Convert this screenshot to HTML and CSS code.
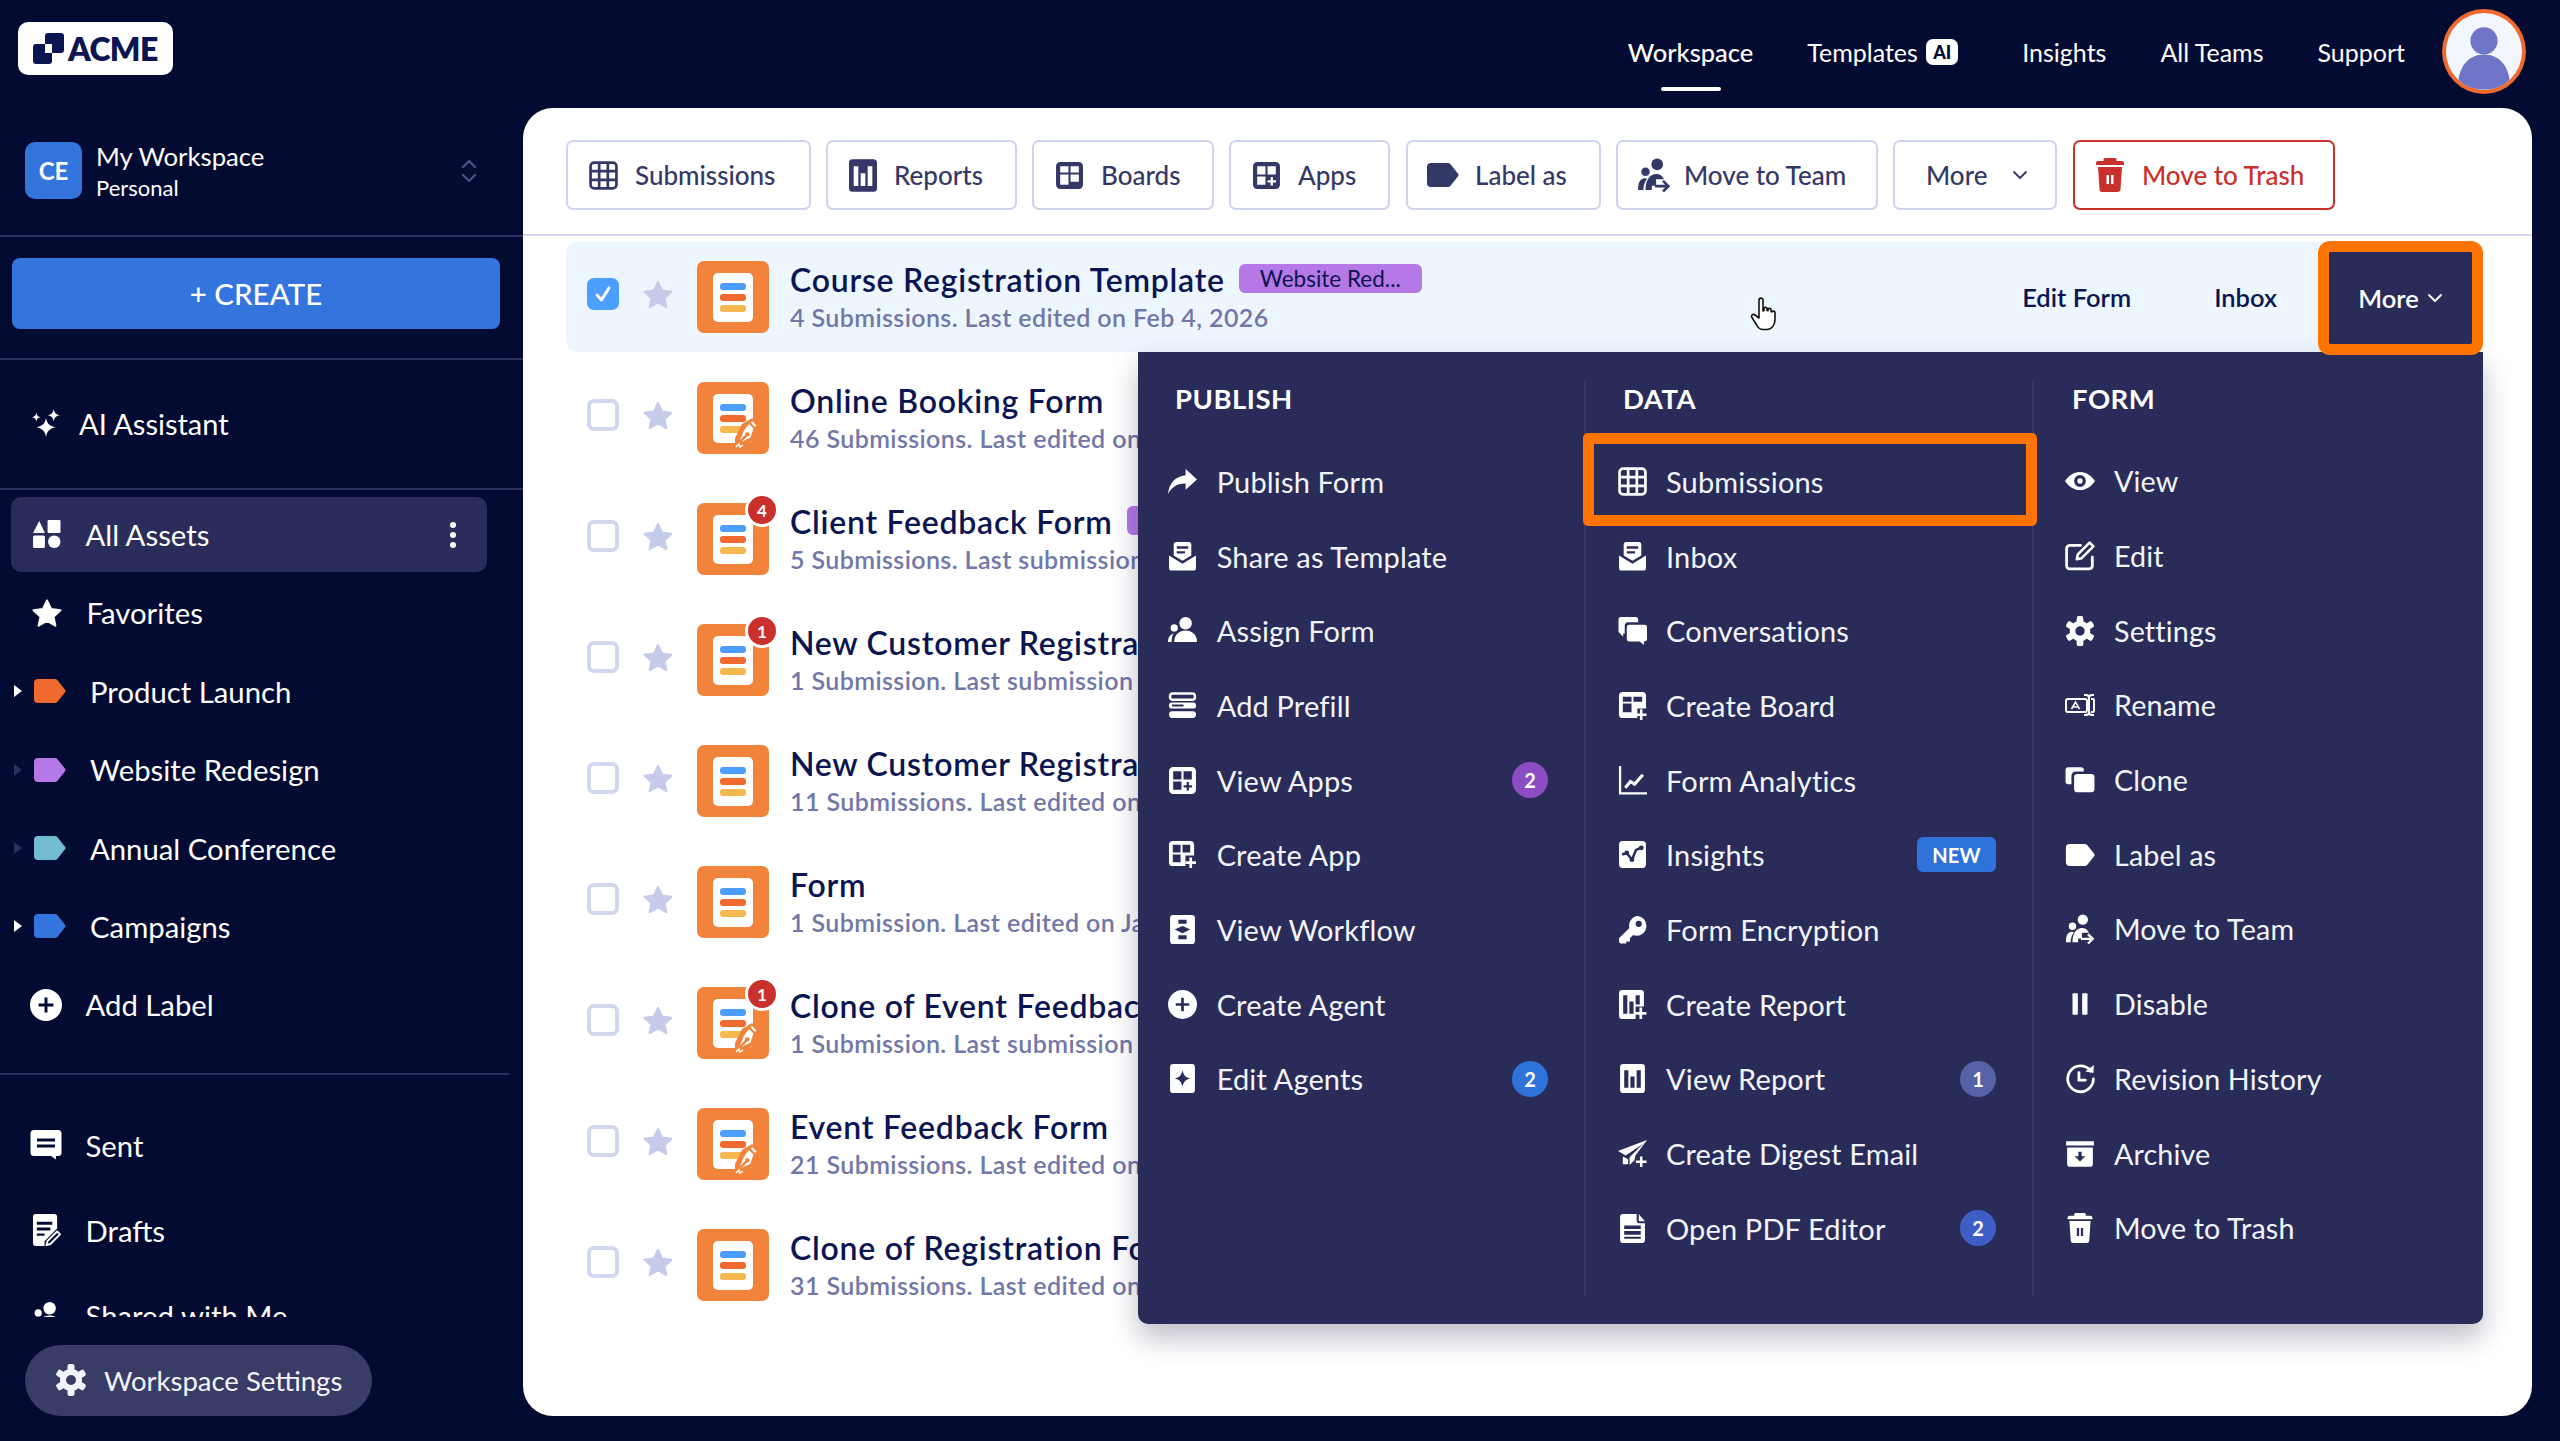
FILE: index.html
```html
<!DOCTYPE html>
<html lang="en">
<head>
<meta charset="utf-8">
<title>ACME Workspace</title>
<link rel="stylesheet" href="styles.css">
</head>
<body>
<svg class="sprite" aria-hidden="true">
  <symbol id="i-grid" viewBox="0 0 28 28"><g fill="none" stroke="currentColor" stroke-width="2.6"><rect x="1.5" y="1.5" width="25" height="25" rx="3.5"/><path d="M9.8 2v24M18.2 2v24M2 9.8h24M2 18.2h24"/></g></symbol>
  <symbol id="i-report" viewBox="2 0 24 28"><path fill="currentColor" fill-rule="evenodd" d="M5 0h18a3 3 0 0 1 3 3v22a3 3 0 0 1-3 3H5a3 3 0 0 1-3-3V3a3 3 0 0 1 3-3z M6 6h4v17H6z M12 12h4v11h-4z M18 6h4v17h-4z"/></symbol>
  <symbol id="i-board" viewBox="0 0 28 28"><path fill="currentColor" fill-rule="evenodd" d="M5 1h18a4 4 0 0 1 4 4v18a4 4 0 0 1-4 4H5a4 4 0 0 1-4-4V5a4 4 0 0 1 4-4z M5 5h8v6H5z M15 5h8v6h-8z M5 13h8v10H5z M15 13h8v7h-8z"/></symbol>
  <symbol id="i-apps" viewBox="0 0 28 28"><path fill="currentColor" fill-rule="evenodd" d="M5 1h18a4 4 0 0 1 4 4v18a4 4 0 0 1-4 4H5a4 4 0 0 1-4-4V5a4 4 0 0 1 4-4z M5 5h8v8H5z M15 5h8v8h-8z M5 15h8v8H5z M18 15.5h2.2v3h3v2.2h-3v3H18v-3h-3v-2.2h3z"/></symbol>
  <symbol id="i-createapp" viewBox="0 0 30 30"><path fill="currentColor" fill-rule="evenodd" d="M5 1h18a4 4 0 0 1 4 4v11h-9v11H5a4 4 0 0 1-4-4V5a4 4 0 0 1 4-4z M5 5v8h8V5z M15 5v8h8V5z M5 15v8h8v-8z"/><path fill="none" stroke="currentColor" stroke-width="2.8" d="M23.500 18v11M18 23.500h11"/></symbol>
  <symbol id="i-createboard" viewBox="0 0 30 30"><path fill="currentColor" fill-rule="evenodd" d="M5 1h20a4 4 0 0 1 4 4v13h-9v10H5a4 4 0 0 1-4-4V5a4 4 0 0 1 4-4z M5 6h9v5H5z M16 6h9v5h-9z M5 13h9v9H5z"/><path fill="none" stroke="currentColor" stroke-width="2.6" d="M24 19v11M18.5 24.500h11"/></symbol>
  <symbol id="i-label" viewBox="0 0 33 24"><path fill="currentColor" d="M5 0h17a3 3 0 0 1 2.300 1l7.600 9.400a2.600 2.600 0 0 1 0 3.200L24.300 23a3 3 0 0 1-2.300 1H5a4 4 0 0 1-4-4V4a4 4 0 0 1 4-4z"/></symbol>
  <symbol id="i-team" viewBox="0 0 32 32"><g fill="currentColor"><circle cx="19" cy="6" r="5.500"/><circle cx="8" cy="13" r="4"/><path d="M8 30c0-9 4-15 10-15 4 0 6 2 7.500 5H18v6h-4v4z"/><path d="M1 30c0-6 1.500-11 6.500-11 1 0 1.500 .2 2 .5C7.500 22 6 26 6 30z"/></g><path fill="none" stroke="currentColor" stroke-width="2.500" d="M17 26.500h11M24.500 21.500l5 5-5 5"/></symbol>
  <symbol id="i-trash" viewBox="0 0 28 34"><path fill="currentColor" fill-rule="evenodd" d="M9 0h10a1.500 1.500 0 0 1 1.500 1.500V3H26a2 2 0 0 1 2 2v2H0V5a2 2 0 0 1 2-2h5.500V1.500A1.500 1.500 0 0 1 9 0z M2 9h24l-1.500 22a3 3 0 0 1-3 3h-15a3 3 0 0 1-3-3z M10.500 17v9h2.500v-9z M15 17v9h2.500v-9z"/></symbol>
  <symbol id="i-share" viewBox="0 0 28 28"><path fill="currentColor" d="M17 2l11 10-11 10v-6C9 16 4 19 0 26c1-10 7-17 17-18z"/></symbol>
  <symbol id="i-mail" viewBox="0 0 28 28"><path fill="currentColor" fill-rule="evenodd" d="M1 13l13 8 13-8v12a2.500 2.500 0 0 1-2.500 2.500h-21A2.500 2.500 0 0 1 1 25z M8 0h12a2.500 2.500 0 0 1 2.500 2.500V13L14 18 5.500 13V2.500A2.500 2.500 0 0 1 8 0z M8.500 4v2.500h11V4z M8.500 9v2h8V9z"/></symbol>
  <symbol id="i-assign" viewBox="0 0 28 28"><g fill="currentColor"><circle cx="17" cy="7" r="6"/><path d="M6 25c0-7 5-11 11-11s11 4 11 11z"/><circle cx="6" cy="11.500" r="3.500"/><path d="M0 25c0-4 2-7 5.500-8C4 19 3.500 22 3.500 25z"/></g></symbol>
  <symbol id="i-prefill" viewBox="0 0 28 28"><rect x="2" y="2.500" width="24" height="6" rx="2.500" fill="none" stroke="currentColor" stroke-width="2.400"/><path fill="currentColor" fill-rule="evenodd" d="M3.500 11h21a2.500 2.500 0 0 1 2.500 2.500v1a2.500 2.500 0 0 1-2.500 2.500h-21A2.500 2.500 0 0 1 1 14.500v-1A2.500 2.500 0 0 1 3.500 11z M4 13v2h11v-2z"/><rect x="1" y="19.500" width="26" height="6.500" rx="3" fill="currentColor"/></symbol>
  <symbol id="i-plus" viewBox="0 0 28 28"><path fill="currentColor" fill-rule="evenodd" d="M14 0a14 14 0 1 0 0 28a14 14 0 1 0 0-28z M12.700 7.500h2.600v5.200h5.200v2.600h-5.200v5.200h-2.600v-5.200H7.500v-2.600h5.200z"/></symbol>
  <symbol id="i-flow" viewBox="0 0 28 28"><path fill="currentColor" fill-rule="evenodd" d="M5 0h18a3 3 0 0 1 3 3v22a3 3 0 0 1-3 3H5a3 3 0 0 1-3-3V3a3 3 0 0 1 3-3z M10 4.500v4h8v-4z M14 10.500l7.500 3.500-7.500 3.500-7.500-3.500z M10 19.500v4h8v-4z"/></symbol>
  <symbol id="i-agent" viewBox="0 0 28 28"><path fill="currentColor" fill-rule="evenodd" d="M5 0h18a3 3 0 0 1 3 3v22a3 3 0 0 1-3 3H5a3 3 0 0 1-3-3V3a3 3 0 0 1 3-3z M14 6c1 5 3 7 7.500 8-4.500 1-6.500 3-7.500 8-1-5-3-7-7.500-8 4.500-1 6.500-3 7.500-8z"/></symbol>
  <symbol id="i-chats" viewBox="0 0 28 28"><path fill="currentColor" d="M3 1h14a2.500 2.500 0 0 1 2.500 2.500V6H10a3.500 3.500 0 0 0-3.500 3.500V17H5v3l-3-3.200A2.500 2.500 0 0 1 .5 14.500v-11A2.500 2.500 0 0 1 3 1z"/><path fill="currentColor" d="M11 8.500h14.500A2.500 2.500 0 0 1 28 11v11a2.500 2.500 0 0 1-2.500 2.500H25V28l-4-3.500H11A2.500 2.500 0 0 1 8.500 22V11A2.500 2.500 0 0 1 11 8.500z"/></symbol>
  <symbol id="i-analytics" viewBox="0 0 28 28"><path fill="none" stroke="currentColor" stroke-width="2.200" d="M2 0v26.500h26"/><path fill="none" stroke="currentColor" stroke-width="3" d="M7 21l5-6 4 2.500 8-9"/></symbol>
  <symbol id="i-insights" viewBox="0 0 28 28"><rect x="1" y="1" width="26" height="26" rx="3.500" fill="currentColor"/><path fill="none" stroke="#292c58" stroke-width="2.400" stroke-linejoin="round" d="M4 14l4.500-1.500 5 6.500 4-9.500 5-2"/><circle cx="8.500" cy="12.500" r="2.300" fill="#292c58"/><circle cx="13.500" cy="19" r="2.300" fill="#292c58"/><circle cx="22.500" cy="7.500" r="2.300" fill="#292c58"/></symbol>
  <symbol id="i-key" viewBox="0 0 28 28"><path fill="currentColor" fill-rule="evenodd" d="M18 1a9.500 9.500 0 1 1-3.400 18.400L11.500 22.500v3H8v2H3.500A2.500 2.500 0 0 1 1 25v-2.500l10-10A9.500 9.500 0 0 1 18 1z M20 5.500a3 3 0 1 0 0 6a3 3 0 1 0 0-6z"/></symbol>
  <symbol id="i-createreport" viewBox="0 0 28 28"><path fill="currentColor" fill-rule="evenodd" d="M4 0h18a3 3 0 0 1 3 3v13h-8v12H4a3 3 0 0 1-3-3V3a3 3 0 0 1 3-3z M5 5v18h4V5z M11 11v12h4V11z M17 5v9h4V5z"/><path fill="none" stroke="currentColor" stroke-width="2.600" d="M22 17v11M16.500 22.500h11"/></symbol>
  <symbol id="i-digest" viewBox="0 0 30 28"><path fill="currentColor" d="M30 0L0 11.500l8 4.500L26 4 12 18v8l5-5 1-5z"/><path fill="currentColor" d="M5 17l5.500 3v5H5z"/><path fill="none" stroke="currentColor" stroke-width="2.600" d="M24 17v11M18.500 22.500h11"/></symbol>
  <symbol id="i-pdf" viewBox="0 0 28 28"><path fill="currentColor" fill-rule="evenodd" d="M5 0h13v6a3 3 0 0 0 3 3h5v16a3 3 0 0 1-3 3H5a3 3 0 0 1-3-3V3a3 3 0 0 1 3-3z M6 11v3.500h16V11z M6 16.500V20h16v-3.500z M6 22v2h16v-2z M20 0l6 7h-5a1 1 0 0 1-1-1z"/></symbol>
  <symbol id="i-eye" viewBox="0 0 28 28"><path fill="currentColor" fill-rule="evenodd" d="M14 5.500C7.500 5.500 2.500 10 0 14c2.500 4 7.500 8.500 14 8.500S25.500 18 28 14c-2.500-4-7.500-8.500-14-8.500z M14 8.500a5.500 5.500 0 1 0 0 11a5.500 5.500 0 1 0 0-11z M14 11.500a2.500 2.500 0 1 1 0 5a2.500 2.500 0 1 1 0-5z"/></symbol>
  <symbol id="i-edit" viewBox="0 0 28 28"><path fill="none" stroke="currentColor" stroke-width="2.600" stroke-linecap="round" d="M25.500 15v8a3 3 0 0 1-3 3h-18a3 3 0 0 1-3-3V7a3 3 0 0 1 3-3h10"/><path fill="none" stroke="currentColor" stroke-width="2.400" stroke-linejoin="round" d="M23 1.500l3.500 3.500-11 11-4.500 1 1-4.500z"/></symbol>
  <symbol id="i-gear" viewBox="0 0 32 32"><path fill="currentColor" fill-rule="evenodd" d="M16 5a11 11 0 1 0 0 22a11 11 0 1 0 0-22z M16 11a5 5 0 1 1 0 10a5 5 0 1 1 0-10z"/><g fill="currentColor"><rect x="12.500" y="0" width="7" height="7" rx="2"/><rect x="12.500" y="25" width="7" height="7" rx="2"/><rect x="12.500" y="0" width="7" height="7" rx="2" transform="rotate(60 16 16)"/><rect x="12.500" y="0" width="7" height="7" rx="2" transform="rotate(120 16 16)"/><rect x="12.500" y="0" width="7" height="7" rx="2" transform="rotate(240 16 16)"/><rect x="12.500" y="0" width="7" height="7" rx="2" transform="rotate(300 16 16)"/></g></symbol>
  <symbol id="i-rename" viewBox="0 0 30 28"><rect x="1" y="8" width="21" height="13" rx="2" fill="none" stroke="currentColor" stroke-width="2"/><path fill="none" stroke="currentColor" stroke-width="1.600" d="M6.500 18l4-7 4 7M8 16h5"/><path fill="none" stroke="currentColor" stroke-width="2" d="M19 4h2a3 3 0 0 1 3 3v14a3 3 0 0 1-3 3h-2M29 4h-2a3 3 0 0 0-3 3v14a3 3 0 0 0 3 3h2"/><path fill="none" stroke="currentColor" stroke-width="2" d="M26 8h2a1 1 0 0 1 1 1v11a1 1 0 0 1-1 1h-2"/></symbol>
  <symbol id="i-clone" viewBox="0 0 28 28"><path fill="currentColor" d="M3 2h12a2.500 2.500 0 0 1 2.500 2.500V6H10a4 4 0 0 0-4 4v8H3a2.500 2.500 0 0 1-2.500-2.500v-11A2.500 2.500 0 0 1 3 2z"/><rect x="8.500" y="8.500" width="19" height="17" rx="3" fill="currentColor"/></symbol>
  <symbol id="i-pause" viewBox="0 0 28 28"><rect x="7" y="4" width="5" height="20" rx="1" fill="currentColor"/><rect x="16" y="4" width="5" height="20" rx="1" fill="currentColor"/></symbol>
  <symbol id="i-history" viewBox="0 0 28 28"><path fill="none" stroke="currentColor" stroke-width="2.600" stroke-linecap="round" d="M24 6.500A12 12 0 1 0 26.500 14"/><path fill="currentColor" d="M19 7l7.500 1.500L27 1z"/><path fill="none" stroke="currentColor" stroke-width="2.600" stroke-linecap="round" d="M13 8v7h6"/></symbol>
  <symbol id="i-archive" viewBox="0 0 28 28"><path fill="currentColor" fill-rule="evenodd" d="M1 2h26v4H1z M2 8h24v15a3 3 0 0 1-3 3H5a3 3 0 0 1-3-3z M12.500 12v4H9l5 5 5-5h-3.500v-4z"/></symbol>
  <symbol id="i-star" viewBox="0 0 30 28"><path fill="currentColor" stroke="currentColor" stroke-width="2" stroke-linejoin="round" d="M15 2l4 8.500 9.500 1.200-7 6.500 1.900 9-8.400-4.700-8.400 4.700 1.900-9-7-6.500L11 10.500z"/></symbol>
  <symbol id="i-spark" viewBox="0 0 30 30"><g fill="currentColor"><path d="M14.500 9c1 6 3.500 8.500 10 10-6.500 1.500-9 4-10 10-1-6-3.500-8.500-10-10 6.500-1.500 9-4 10-10z"/><path d="M22.500 0c.7 4.200 2.300 5.800 6.500 6.500-4.200.7-5.800 2.300-6.500 6.500-.7-4.200-2.300-5.800-6.500-6.500 4.200-.7 5.800-2.300 6.500-6.500z"/><path d="M4.500 4c.5 3 1.500 4 4.500 4.500-3 .5-4 1.500-4.500 4.500C4 10 3 9 0 8.500 3 8 4 7 4.500 4z"/></g></symbol>
  <symbol id="i-assets" viewBox="0 0 28 28"><path fill="currentColor" d="M7 1l5.500 11.500H1z"/><rect x="15" y="0" width="12.500" height="12.500" rx="1" fill="currentColor"/><rect x="1" y="15" width="11.500" height="12" rx="1.500" fill="currentColor"/><circle cx="21.500" cy="21" r="6" fill="currentColor"/></symbol>
  <symbol id="i-sent" viewBox="0 0 32 30"><path fill="currentColor" fill-rule="evenodd" d="M4 0h24a3.500 3.500 0 0 1 3.500 3.500v19A3.500 3.500 0 0 1 28 26h-2v3.500L21 26H4a3.500 3.500 0 0 1-3.500-3.500v-19A3.500 3.500 0 0 1 4 0z M7 8.500v3h18v-3z M7 14.500v3h18v-3z"/></symbol>
  <symbol id="i-drafts" viewBox="0 0 30 34"><path fill="currentColor" fill-rule="evenodd" d="M4 0h19a3 3 0 0 1 3 3v12L13 28v5H4a3 3 0 0 1-3-3V3a3 3 0 0 1 3-3z M5 8v3h16V8z M5 14v3h14v-3z M5 20v2.500h8V20z"/><path fill="none" stroke="currentColor" stroke-width="2" stroke-linejoin="round" d="M26 18l3 3-10 10-4 1 1-4z"/></symbol>
  <symbol id="i-shared" viewBox="0 0 28 28"><g fill="currentColor"><circle cx="17" cy="7" r="6"/><circle cx="6" cy="11.500" r="3.500"/><path d="M6 25c0-7 5-11 11-11s11 4 11 11z"/><path d="M0 25c0-4 2-7 5.500-8C4 19 3.500 22 3.500 25z"/></g></symbol>
  <symbol id="i-nib" viewBox="0 0 24 32"><path fill="#f1843a" d="M17 0l7 7-4 14-12 8H0v-9L7 6z"/><path fill="#fff" d="M17 3l4.500 4.500L20 9l-4.500-4.500z"/><path fill="#fff" d="M14 6l4.500 4.500-3 9-9 4.500 5.500-5.500a2.200 2.200 0 1 0-1.800-1.800L5 22.500l4-10z"/><path fill="none" stroke="#fff" stroke-width="1.500" d="M1 29l3-3 1 3 3-2"/></symbol>
  <symbol id="i-chev" viewBox="0 0 16 10"><path fill="none" stroke="currentColor" stroke-width="1.800" stroke-linecap="round" stroke-linejoin="round" d="M2 2l6 6 6-6"/></symbol>
</svg>

<header class="topbar">
  <div class="logo">
    <svg class="logo-mark" viewBox="0 0 31 31"><path fill="#0a1551" d="M15 0h13a3 3 0 0 1 3 3v14a3 3 0 0 1-3 3H19v-9h-7V3a3 3 0 0 1 3-3z"/><path fill="#0a1551" d="M3 11h9v9h7v8a3 3 0 0 1-3 3H3a3 3 0 0 1-3-3V14a3 3 0 0 1 3-3z"/></svg>
    <span class="logo-text">ACME</span>
  </div>
  <nav class="topnav">
    <a class="topnav-item is-active">Workspace</a>
    <a class="topnav-item topnav-templates">Templates <span class="ai-chip">AI</span></a>
    <a class="topnav-item">Insights</a>
    <a class="topnav-item">All Teams</a>
    <a class="topnav-item">Support</a>
  </nav>
  <div class="avatar">
    <svg viewBox="0 0 78 78" class="avatar-img"><circle cx="39" cy="28" r="14" fill="#6f76c8"/><path fill="#6f76c8" d="M12 78c0-24 11-36 27-36s27 12 27 36z"/></svg>
  </div>
</header>

<div class="layout">
  <aside class="sidebar">
    <div class="ws">
      <div class="ws-badge">CE</div>
      <div class="ws-text">
        <div class="ws-name">My Workspace</div>
        <div class="ws-sub">Personal</div>
      </div>
      <svg class="ws-switch" viewBox="0 0 16 24"><path fill="none" stroke="#4a5183" stroke-width="2.400" stroke-linecap="round" stroke-linejoin="round" d="M2 8l6-6 6 6M2 16l6 6 6-6"/></svg>
    </div>
    <div class="create-wrap"><button class="create">+ CREATE</button></div>
    <div class="ai-row">
      <svg class="ic-side ic-ai"><use href="#i-spark"/></svg>
      <span>AI Assistant</span>
    </div>
    <ul class="side-list">
      <li class="side-item is-current"><svg class="ic-side"><use href="#i-assets"/></svg><span class="side-text">All Assets</span>
        <span class="kebab"><i></i><i></i><i></i></span></li>
      <li class="side-item"><svg class="ic-side ic-favstar"><use href="#i-star"/></svg><span class="side-text">Favorites</span></li>
      <li class="side-item side-label"><span class="caret"></span><svg class="lab lab-orange"><use href="#i-label"/></svg><span class="side-text">Product Launch</span></li>
      <li class="side-item side-label"><span class="caret caret-dim"></span><svg class="lab lab-purple"><use href="#i-label"/></svg><span class="side-text">Website Redesign</span></li>
      <li class="side-item side-label"><span class="caret caret-dim"></span><svg class="lab lab-teal"><use href="#i-label"/></svg><span class="side-text">Annual Conference</span></li>
      <li class="side-item side-label"><span class="caret"></span><svg class="lab lab-blue"><use href="#i-label"/></svg><span class="side-text">Campaigns</span></li>
      <li class="side-item"><svg class="ic-side ic-wide"><use href="#i-plus"/></svg><span class="side-text">Add Label</span></li>
    </ul>
    <hr class="side-rule">
    <div class="side-scroll">
      <div class="scroll-row"><svg class="ic-side ic-wide"><use href="#i-sent"/></svg><span class="side-text">Sent</span></div>
      <div class="scroll-row"><svg class="ic-side ic-tall"><use href="#i-drafts"/></svg><span class="side-text">Drafts</span></div>
      <div class="scroll-row"><svg class="ic-side"><use href="#i-shared"/></svg><span class="side-text">Shared with Me</span></div>
    </div>
    <div class="ws-settings"><svg class="ic-gear"><use href="#i-gear"/></svg><span>Workspace Settings</span></div>
  </aside>

  <main class="panel">
    <div class="toolbar">
      <button class="tool tool-sub"><svg class="ic-tool"><use href="#i-grid"/></svg>Submissions</button>
      <button class="tool tool-rep"><svg class="ic-tool ic-tool-report"><use href="#i-report"/></svg>Reports</button>
      <button class="tool tool-boa"><svg class="ic-tool"><use href="#i-board"/></svg>Boards</button>
      <button class="tool tool-app"><svg class="ic-tool"><use href="#i-apps"/></svg>Apps</button>
      <button class="tool tool-lab"><svg class="ic-tool-label"><use href="#i-label"/></svg>Label as</button>
      <button class="tool tool-tea"><svg class="ic-tool ic-tool-team"><use href="#i-team"/></svg>Move to Team</button>
      <button class="tool tool-mor">More<svg class="ic-chev"><use href="#i-chev"/></svg></button>
      <button class="tool tool-del"><svg class="ic-tool-trash"><use href="#i-trash"/></svg>Move to Trash</button>
    </div>
    <div class="list">
      <div class="row is-selected">
        <span class="check is-checked"><svg viewBox="0 0 32 32"><path fill="none" stroke="#fff" stroke-width="3" stroke-linecap="round" stroke-linejoin="round" d="M10 17l4.500 5L22 10"/></svg></span>
        <svg class="star"><use href="#i-star"/></svg>
        <span class="form-ico"><span class="doc"><i></i><i></i><i></i></span></span>
        <div class="row-text">
          <div class="row-title">Course Registration Template <span class="tag">Website Red...</span></div>
          <div class="row-sub">4 Submissions. Last edited on Feb 4, 2026</div>
        </div>
        <div class="row-actions">
          <a class="row-link row-link-edit">Edit Form</a>
          <a class="row-link row-link-inbox">Inbox</a>
          <button class="row-more">More<svg class="ic-chev"><use href="#i-chev"/></svg></button>
        </div>
      </div>
      <div class="row">
        <span class="check"></span><svg class="star"><use href="#i-star"/></svg>
        <span class="form-ico"><span class="doc"><i></i><i></i><i></i></span><svg class="nib"><use href="#i-nib"/></svg></span>
        <div class="row-text"><div class="row-title">Online Booking Form</div><div class="row-sub">46 Submissions. Last edited on Jan 28, 2026</div></div>
      </div>
      <div class="row">
        <span class="check"></span><svg class="star"><use href="#i-star"/></svg>
        <span class="form-ico"><span class="doc"><i></i><i></i><i></i></span><b class="count">4</b></span>
        <div class="row-text"><div class="row-title">Client Feedback Form <span class="tag">Website Red...</span></div><div class="row-sub">5 Submissions. Last submission on Jan 20, 2026</div></div>
      </div>
      <div class="row">
        <span class="check"></span><svg class="star"><use href="#i-star"/></svg>
        <span class="form-ico"><span class="doc"><i></i><i></i><i></i></span><b class="count">1</b></span>
        <div class="row-text"><div class="row-title">New Customer Registration Form</div><div class="row-sub">1 Submission. Last submission on Jan 15, 2026</div></div>
      </div>
      <div class="row">
        <span class="check"></span><svg class="star"><use href="#i-star"/></svg>
        <span class="form-ico"><span class="doc"><i></i><i></i><i></i></span></span>
        <div class="row-text"><div class="row-title">New Customer Registration</div><div class="row-sub">11 Submissions. Last edited on Jan 12, 2026</div></div>
      </div>
      <div class="row">
        <span class="check"></span><svg class="star"><use href="#i-star"/></svg>
        <span class="form-ico"><span class="doc"><i></i><i></i><i></i></span></span>
        <div class="row-text"><div class="row-title">Form</div><div class="row-sub">1 Submission. Last edited on Jan 9, 2026</div></div>
      </div>
      <div class="row">
        <span class="check"></span><svg class="star"><use href="#i-star"/></svg>
        <span class="form-ico"><span class="doc"><i></i><i></i><i></i></span><svg class="nib"><use href="#i-nib"/></svg><b class="count">1</b></span>
        <div class="row-text"><div class="row-title">Clone of Event Feedback Form</div><div class="row-sub">1 Submission. Last submission on Jan 6, 2026</div></div>
      </div>
      <div class="row">
        <span class="check"></span><svg class="star"><use href="#i-star"/></svg>
        <span class="form-ico"><span class="doc"><i></i><i></i><i></i></span><svg class="nib"><use href="#i-nib"/></svg></span>
        <div class="row-text"><div class="row-title">Event Feedback Form</div><div class="row-sub">21 Submissions. Last edited on Jan 2, 2026</div></div>
      </div>
      <div class="row">
        <span class="check"></span><svg class="star"><use href="#i-star"/></svg>
        <span class="form-ico"><span class="doc"><i></i><i></i><i></i></span></span>
        <div class="row-text"><div class="row-title">Clone of Registration Form</div><div class="row-sub">31 Submissions. Last edited on Dec 30, 2025</div></div>
      </div>
    </div>

    <div class="menu">
      <section class="menu-col menu-col-a">
        <h3>PUBLISH</h3>
        <a class="mi"><svg><use href="#i-share"/></svg><span>Publish Form</span></a>
        <a class="mi"><svg><use href="#i-mail"/></svg><span>Share as Template</span></a>
        <a class="mi"><svg><use href="#i-assign"/></svg><span>Assign Form</span></a>
        <a class="mi"><svg><use href="#i-prefill"/></svg><span>Add Prefill</span></a>
        <a class="mi"><svg><use href="#i-apps"/></svg><span>View Apps</span><b class="pill pill-purple">2</b></a>
        <a class="mi"><svg><use href="#i-createapp"/></svg><span>Create App</span></a>
        <a class="mi"><svg><use href="#i-flow"/></svg><span>View Workflow</span></a>
        <a class="mi"><svg><use href="#i-plus"/></svg><span>Create Agent</span></a>
        <a class="mi"><svg><use href="#i-agent"/></svg><span>Edit Agents</span><b class="pill pill-blue">2</b></a>
      </section>
      <section class="menu-col menu-col-b">
        <h3>DATA</h3>
        <a class="mi mi-hl"><svg><use href="#i-grid"/></svg><span>Submissions</span></a>
        <a class="mi"><svg><use href="#i-mail"/></svg><span>Inbox</span></a>
        <a class="mi"><svg><use href="#i-chats"/></svg><span>Conversations</span></a>
        <a class="mi"><svg><use href="#i-createboard"/></svg><span>Create Board</span></a>
        <a class="mi"><svg><use href="#i-analytics"/></svg><span>Form Analytics</span></a>
        <a class="mi"><svg><use href="#i-insights"/></svg><span>Insights</span><b class="new">NEW</b></a>
        <a class="mi"><svg><use href="#i-key"/></svg><span>Form Encryption</span></a>
        <a class="mi"><svg><use href="#i-createreport"/></svg><span>Create Report</span></a>
        <a class="mi"><svg><use href="#i-report"/></svg><span>View Report</span><b class="pill pill-slate">1</b></a>
        <a class="mi"><svg><use href="#i-digest"/></svg><span>Create Digest Email</span></a>
        <a class="mi"><svg><use href="#i-pdf"/></svg><span>Open PDF Editor</span><b class="pill pill-indigo">2</b></a>
      </section>
      <section class="menu-col menu-col-c">
        <h3>FORM</h3>
        <a class="mi"><svg><use href="#i-eye"/></svg><span>View</span></a>
        <a class="mi"><svg><use href="#i-edit"/></svg><span>Edit</span></a>
        <a class="mi"><svg><use href="#i-gear"/></svg><span>Settings</span></a>
        <a class="mi"><svg><use href="#i-rename"/></svg><span>Rename</span></a>
        <a class="mi"><svg><use href="#i-clone"/></svg><span>Clone</span></a>
        <a class="mi"><svg><use href="#i-label"/></svg><span>Label as</span></a>
        <a class="mi"><svg><use href="#i-team"/></svg><span>Move to Team</span></a>
        <a class="mi"><svg><use href="#i-pause"/></svg><span>Disable</span></a>
        <a class="mi"><svg><use href="#i-history"/></svg><span>Revision History</span></a>
        <a class="mi"><svg><use href="#i-archive"/></svg><span>Archive</span></a>
        <a class="mi"><svg><use href="#i-trash"/></svg><span>Move to Trash</span></a>
      </section>
    </div>
    <svg class="cursor" viewBox="0 0 28 34"><path fill="#fff" stroke="#111" stroke-width="1.600" stroke-linejoin="round" d="M9 3c0-2.500 4-2.500 4 0v11l1-.5v-2c0-1.500 3-1.500 3 0v2l1 .3v-1.300c0-1.500 3-1.500 3 0v2l1 .5c0-1.500 3-1 3 .5v7c0 5-3 10-8 10h-4c-3 0-5-2-6-4l-5-8c-1.500-2 1-4 3-2.500L9 21z"/></svg>
  </main>
</div>
</body>
</html>
```
FILE: styles.css
```css
*, *::before, *::after { box-sizing: border-box; }
html, body { margin: 0; padding: 0; }
body {
  width: 2560px;
  height: 1441px;
  overflow: hidden;
  background: #030b32;
  color: #fff;
  font-family: "Lato", "Liberation Sans", sans-serif;
  font-size: 28px;
  display: flex;
  flex-direction: column;
}
.sprite { position: absolute; width: 0; height: 0; overflow: hidden; }
button { font: inherit; cursor: pointer; }
a { color: inherit; text-decoration: none; }

/* top bar */
.topbar { height: 108px; flex: none; display: flex; align-items: flex-start; padding: 0 34px 0 18px; }
.logo { margin-top: 22px; width: 155px; height: 53px; background: #fff; border-radius: 10px; display: flex; align-items: center; padding-left: 15px; gap: 4px; }
.logo-mark { width: 31px; height: 31px; flex: none; }
.logo-text { color: #0a1551; font-weight: 800; font-size: 32px; letter-spacing: -.6px; }
.topnav { margin-left: auto; display: flex; gap: 54px; height: 92px; }
.topnav-item { position: relative; font-size: 25px; height: 92px; display: flex; align-items: center; padding-top: 12px; white-space: pre; }
.topnav-item.is-active { font-weight: 500; font-size: 25.5px; }
.topnav-item.is-active::after { content: ""; position: absolute; left: 33px; right: 32px; top: 87px; height: 4px; background: #fff; border-radius: 2px; }
.topnav-templates { margin-right: 10px; }
.ai-chip { display: inline-block; width: 32px; height: 26px; line-height: 26px; text-align: center; background: #fff; color: #030b32; border-radius: 7px; font-size: 18px; font-weight: 900; margin-left: 2px; }
.avatar { width: 84px; height: 85px; margin: 9px 0 0 37px; border-radius: 50%; border: 4px solid #f0692e; background: #f3f6fe; overflow: hidden; flex: none; }
.avatar-img { width: 100%; height: 100%; display: block; }

/* layout */
.layout { flex: 1; display: flex; min-height: 0; }

/* sidebar */
.sidebar { width: 523px; flex: none; display: flex; flex-direction: column; }
.ws { height: 129px; flex: none; display: flex; align-items: flex-start; padding: 34px 46px 0 25px; border-bottom: 2px solid #2a2f5e; }
.ws-badge { width: 57px; height: 57px; background: #3475dd; border-radius: 10px; display: flex; align-items: center; justify-content: center; font-size: 24px; font-weight: 700; flex: none; }
.ws-text { margin-left: 14px; flex: 1; }
.ws-name { font-size: 25.7px; line-height: 33px; margin-top: -2px; }
.ws-sub { font-size: 22px; line-height: 30px; }
.ws-switch { width: 16px; height: 24px; margin-top: 17px; flex: none; }
.create-wrap { height: 123px; flex: none; padding: 21px 23px 0 12px; border-bottom: 2px solid #2a2f5e; }
.create { width: 100%; height: 71px; background: #3475dd; border: 0; border-radius: 8px; color: #fff; font-size: 29.5px; font-weight: 500; }
.ai-row { height: 130px; flex: none; display: flex; align-items: center; padding: 0 0 2px 32px; font-size: 29px; border-bottom: 2px solid #2a2f5e; }
.ic-ai { margin-right: 18px; }
.ic-side { width: 29px; height: 29px; flex: none; }
.ic-wide { width: 32px; margin: 0 -1px 0 -2px; height: 32px; }
.ic-tall { height: 33px; }
.side-list { list-style: none; margin: 7px 36px 0 11px; padding: 0; display: flex; flex-direction: column; gap: 3.4px; }
.side-item { height: 75px; display: flex; align-items: center; padding-left: 21px; border-radius: 10px; position: relative; font-size: 29.3px; }
.side-item.is-current { background: #2a2d5b; }
.side-text { margin-left: 24.5px; }
.kebab { position: absolute; right: 31px; top: 25px; display: flex; flex-direction: column; gap: 4px; }
.kebab i { display: block; width: 6px; height: 6px; background: #fff; border-radius: 50%; }
.ic-favstar { width: 30px; }
.side-label { padding-left: 3px; }
.caret { width: 0; height: 0; border-left: 8px solid #fff; border-top: 6.500px solid transparent; border-bottom: 6.500px solid transparent; margin-right: 11px; }
.caret-dim { border-left-color: #2a2f5e; }
.lab { width: 33px; height: 24px; flex: none; }
.lab-orange { color: #f0692e; }
.lab-purple { color: #b678e6; }
.lab-teal { color: #73bccf; }
.lab-blue { color: #3475dd; }
.side-label .side-text { margin-left: 24px; }
.side-rule { border: 0; height: 2px; background: #2a2f5e; margin: 30.6px 14px 0 0; flex: none; }
.side-scroll { height: 242px; flex: none; overflow: hidden; padding-top: 28px; }
.scroll-row { height: 85px; display: flex; align-items: center; padding-left: 32px; font-size: 29.3px; }
.ws-settings { margin: 28px 0 0 25px; width: 347px; height: 71px; flex: none; background: #383c66; border-radius: 36px; display: flex; align-items: center; padding-left: 30px; font-size: 27.5px; color: #f3f4fb; }
.ic-gear { width: 32px; height: 32px; margin-right: 17px; flex: none; }

/* panel */
.panel { position: relative; flex: 1; margin: 0 28px 25px 0; background: #fff; border-radius: 30px; }
.toolbar { height: 128px; display: flex; padding: 32px 0 0 43px; gap: 15px; border-bottom: 2px solid #d5d9f0; }
.tool { height: 70px; background: #fff; border: 2px solid #cfd4ee; border-radius: 7px; color: #343867; font-size: 26px; font-weight: 500; display: flex; align-items: center; justify-content: flex-start; padding: 0 0 0 21px; gap: 17px; flex: none; }
.tool-sub { width: 245px; }
.tool-rep { width: 191px; }
.tool-boa { width: 182px; }
.tool-app { width: 161px; }
.tool-lab { width: 195px; margin-left: 1px; padding-left: 18px; gap: 16px; }
.tool-tea { width: 262px; margin-left: 0; padding-left: 19px; gap: 13px; }
.tool-mor { width: 164px; margin-left: 0; padding-left: 31px; gap: 25px; }
.tool-del { width: 262px; color: #c9302c; border-color: #c9302c; margin-left: 1px; gap: 18px; }
.ic-tool { width: 29px; height: 29px; flex: none; }
.ic-tool-report { width: 28px; height: 33px; }
.ic-tool-team { width: 34px; height: 34px; }
.ic-tool-label { width: 33px; height: 24px; flex: none; }
.ic-tool-trash { width: 28px; height: 34px; flex: none; }
.ic-chev { width: 16px; height: 10px; flex: none; }

/* rows */
.list { padding: 6px 0 0 43px; display: flex; flex-direction: column; gap: 11px; }
.row { height: 110px; display: flex; align-items: center; padding-left: 21px; border-radius: 12px; position: relative; }
.row.is-selected { background: #edf6fe; width: 1906px; }
.check { width: 32px; height: 32px; border: 4px solid #d2d7f0; border-radius: 7px; flex: none; display: block; margin-top: -6px; }
.check.is-checked { background: #4c9ffe; border: 0; }
.check svg { display: block; width: 32px; height: 32px; }
.star { width: 30px; height: 28px; margin: -6px 24px 0; color: #c6cbea; flex: none; }
.form-ico { width: 72px; height: 72px; background: #f1843a; border-radius: 7px; position: relative; flex: none; display: flex; align-items: center; justify-content: center; }
.doc { width: 40px; height: 49px; background: #fff; border-radius: 5px; display: flex; flex-direction: column; align-items: center; justify-content: center; gap: 4px; }
.doc i { width: 26px; height: 7px; border-radius: 3px; }
.doc i:nth-child(1) { background: #4c9ffe; }
.doc i:nth-child(2) { background: #f0692e; }
.doc i:nth-child(3) { background: #f4b84f; }
.nib { position: absolute; width: 24px; height: 32px; right: 10px; bottom: 4px; }
.count { position: absolute; right: -10px; top: -10px; width: 34px; height: 34px; border-radius: 50%; background: #c9302c; border: 3px solid #fff; color: #fff; font-size: 17px; font-weight: 700; display: flex; align-items: center; justify-content: center; }
.row-text { margin: -1px 0 0 21px; flex: none; color: #0a1551; white-space: nowrap; }
.row-title { font-size: 32px; font-weight: 600; letter-spacing: .75px; line-height: 38px; display: flex; align-items: center; gap: 14px; color: #0a1551; }
.row-sub { font-size: 25px; line-height: 30px; margin-top: 3.5px; color: #7177a8; font-weight: 600; letter-spacing: .4px; }
.tag { display: inline-block; width: 183px; height: 29px; line-height: 29px; text-align: center; border-radius: 6px; background: #b678e6; color: #0a1551; font-size: 22.5px; font-weight: 400; letter-spacing: 0; margin-top: -3px; }
.row-actions { margin-left: auto; display: flex; align-items: center; color: #0a1551; font-size: 25.5px; font-weight: 600; }
.row-link-edit { margin-right: 83px; }
.row-link-inbox { margin-right: 52px; }
.row-more { width: 143px; height: 92px; background: #292c58; color: #fff; border: 0; outline: 11px solid #ff7300; outline-offset: 0; border-radius: 1px; display: flex; align-items: center; justify-content: center; gap: 8px; font-size: 25.5px; position: relative; z-index: 3; margin-top: 2px; }

/* dropdown */
.menu { position: absolute; z-index: 2; left: 615px; top: 244px; width: 1345px; height: 972px; background: #292c58; border-radius: 0 0 10px 10px; box-shadow: 0 14px 28px rgba(20,24,60,.28); display: grid; grid-template-columns: 448px 448px 449px; }
.menu-col { margin: 29px 0 28px; padding: 0 36px 0 30px; border-right: 2px solid #343867; height: 915px; }
.menu-col:last-child { border-right: 0; }
.menu-col-b { padding-left: 32px; }
.menu-col-c { padding-left: 31px; }
.menu-col h3 { margin: 0 0 27px 7px; font-size: 27.5px; line-height: 36px; font-weight: 700; letter-spacing: .5px; }
.menu-col-b h3 { margin-left: 5px; }
.mi { height: 74.7px; display: flex; align-items: center; gap: 19.7px; font-size: 29px; letter-spacing: .15px; position: relative; color: #f3f4fb; }
.menu-col-b .mi { gap: 19px; }
.menu-col-c .mi { gap: 19px; font-size: 28.7px; }
.mi svg { width: 29px; height: 29px; flex: none; color: #fff; }
.menu-col-c .mi svg { width: 30px; height: 30px; }
.mi span { flex: 1; }
.mi-hl::after { content: ""; position: absolute; left: -35px; right: -41px; top: -11px; height: 93px; border: 11px solid #ff7300; border-radius: 5px; z-index: 3; }
.pill { width: 36px; height: 36px; border-radius: 50%; display: flex; align-items: center; justify-content: center; font-size: 20px; font-weight: 700; color: #fff; flex: none; }
.pill-purple { background: #8c4cc4; }
.pill-blue { background: #2f73da; }
.pill-slate { background: #5563a6; }
.pill-indigo { background: #3e5ec5; }
.new { width: 79px; height: 35px; background: #2f73da; border-radius: 6px; font-size: 20px; font-weight: 700; display: flex; align-items: center; justify-content: center; color: #fff; flex: none; }

.cursor { position: absolute; z-index: 4; left: 1227px; top: 189px; width: 28px; height: 34px; }
```
